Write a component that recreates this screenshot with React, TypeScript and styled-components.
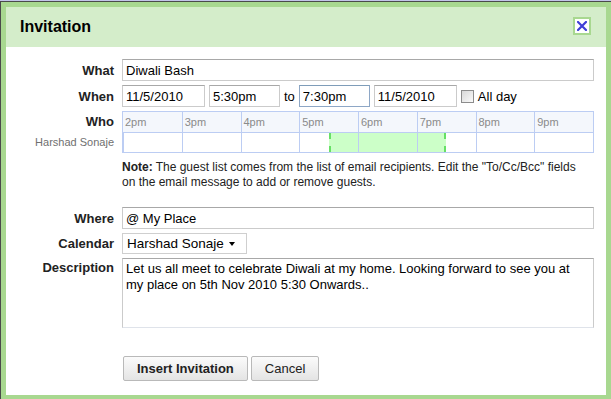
import React from 'react';
import styled, { createGlobalStyle } from 'styled-components';

const Global = createGlobalStyle`
  html, body { margin: 0; padding: 0; background: #fff; }
  body { font-family: "Liberation Sans", Arial, sans-serif; }
  *, *::before, *::after { box-sizing: border-box; }
`;

const FONT = `"Liberation Sans", Arial, sans-serif`;
const GRID_LINE = '#bccdf3';

const Screen = styled.div`
  width: 611px;
  height: 399px;
  overflow: hidden;
  background: #c3c6ea;
  padding-top: 1px;
`;

const Frame = styled.div`
  height: 400px;
  border-top: 1px solid #4a4a4a;
  border-left: 1px solid #4a4a4a;
`;

const Dialog = styled.div`
  width: 610px;
  height: 398px;
  border: 5px solid #a8d890;
  background: #fff;
  display: flex;
  flex-direction: column;
`;

const Header = styled.div`
  flex: none;
  height: 40px;
  background: #d4edca;
  display: flex;
  align-items: center;
  justify-content: space-between;
  padding: 0 15px 0 14px;
`;

const Title = styled.h1`
  margin: 0;
  font: bold 16px ${FONT};
  color: #000;
`;

const CloseButton = styled.button`
  width: 18px;
  height: 18px;
  padding: 0;
  margin-top: -2px;
  border: 2px solid #a8d890;
  background: #fff;
  display: flex;
  align-items: center;
  justify-content: center;
  cursor: pointer;
`;

const Body = styled.div`
  flex: 1;
  padding: 12px 11px 0 0;
`;

const Row = styled.div<{ $mt?: number; $align?: string }>`
  display: grid;
  grid-template-columns: 108px 472px;
  column-gap: 8px;
  margin-top: ${(p) => p.$mt ?? 0}px;
  align-items: ${(p) => p.$align ?? 'center'};
`;

const Label = styled.label<{ $pt?: number }>`
  text-align: right;
  font: bold 13px ${FONT};
  color: #222;
  padding-top: ${(p) => p.$pt ?? 0}px;
`;

const LabelStack = styled.div`
  display: flex;
  flex-direction: column;
  align-items: flex-end;
`;

const StackMain = styled.span`
  font: bold 13px ${FONT};
  color: #222;
  line-height: 21px;
`;

const StackSub = styled.span`
  font: 11px ${FONT};
  color: #707070;
  line-height: 20px;
`;

const TextInput = styled.input<{ $w?: number; $focus?: boolean }>`
  width: ${(p) => (p.$w ? `${p.$w}px` : '100%')};
  height: 22px;
  padding: 0 3px;
  border: 1px solid ${(p) => (p.$focus ? '#8ea7c6' : '#cbcbcb')};
  border-top-color: ${(p) => (p.$focus ? '#7f9db9' : '#a8a8a8')};
  background: #fff;
  font: 13px ${FONT};
  color: #000;
  outline: none;
  flex: none;
`;

const WhenLine = styled.div`
  display: flex;
  align-items: center;
  gap: 4px;
`;

const Plain = styled.span`
  font: 13px ${FONT};
  color: #000;
`;

const CheckBox = styled.span`
  width: 13px;
  height: 13px;
  border: 1px solid #8c8c8c;
  background: linear-gradient(135deg, #d8d8d8, #fafafa);
  flex: none;
`;

const Schedule = styled.div`
  border: 1px solid ${GRID_LINE};
`;

const TimeHeader = styled.div`
  display: grid;
  grid-template-columns: repeat(8, 1fr);
  height: 21px;
  background: #f4f7fc;
  border-bottom: 1px solid ${GRID_LINE};
`;

const TimeCell = styled.div`
  border-left: 1px solid ${GRID_LINE};
  &:first-child { border-left: none; }
  padding-left: 2px;
  font: 11px ${FONT};
  line-height: 20px;
  color: #8a8a8a;
`;

const Track = styled.div`
  position: relative;
  display: grid;
  grid-template-columns: repeat(8, 1fr);
  height: 19px;
`;

const TrackCell = styled.div`
  position: relative;
  z-index: 1;
  border-left: 1px solid ${GRID_LINE};
  &:first-child { border-left: none; }
`;

const Busy = styled.div`
  position: absolute;
  top: 0;
  bottom: 0;
  background: #ccffc8;
  border-left: 2px dashed #66e066;
  border-right: 2px dashed #66e066;
  z-index: 0;
`;

const Note = styled.div`
  max-width: 462px;
  font: 12px ${FONT};
  line-height: 15px;
  color: #222;
`;

const NoteLead = styled.strong`
  font-weight: bold;
  margin-right: 3px;
`;

const SelectBox = styled.button`
  width: 125px;
  height: 21px;
  padding: 0 11px 0 4px;
  border: 1px solid #cfcfcf;
  background: #fff;
  display: flex;
  align-items: center;
  justify-content: space-between;
  font: 13.5px ${FONT};
  color: #000;
  cursor: pointer;
`;

const Caret = styled.span`
  width: 0;
  height: 0;
  border-left: 3.5px solid transparent;
  border-right: 3.5px solid transparent;
  border-top: 4px solid #000;
`;

const TextArea = styled.textarea`
  width: 100%;
  height: 70px;
  padding: 2px 3px;
  border: 1px solid #cbcbcb;
  border-top-color: #a8a8a8;
  border-bottom-color: #dfe3ea;
  font: 13px ${FONT};
  line-height: 16px;
  color: #000;
  resize: none;
  overflow: hidden;
  outline: none;
  display: block;
`;

const Actions = styled.div`
  display: flex;
  gap: 3px;
  padding-left: 1px;
`;

const Button = styled.button<{ $primary?: boolean }>`
  height: 25px;
  padding: 0 13px;
  border: 1px solid #b9b9b9;
  border-radius: 2px;
  background: linear-gradient(#fbfbfb, #e4e4e4);
  font: ${(p) => (p.$primary ? 'bold' : 'normal')} 13px ${FONT};
  color: #222;
  cursor: pointer;
`;

const hours = ['2pm', '3pm', '4pm', '5pm', '6pm', '7pm', '8pm', '9pm'];
const startHour = 14;
const eventStart = 17.5;
const eventEnd = 19.5;

export default function App() {
  const span = hours.length;
  const left = ((eventStart - startHour) / span) * 100;
  const width = ((eventEnd - eventStart) / span) * 100;
  return (
    <>
      <Global />
      <Screen>
        <Frame>
          <Dialog>
            <Header>
              <Title>Invitation</Title>
              <CloseButton aria-label="Close">
                <svg width="10" height="10" viewBox="0 0 10 10">
                  <path d="M1 1 L9 9 M9 1 L1 9" stroke="#3f3fd6" strokeWidth="2.2" strokeLinecap="square" />
                </svg>
              </CloseButton>
            </Header>
            <Body>
              <Row>
                <Label>What</Label>
                <TextInput defaultValue="Diwali Bash" />
              </Row>
              <Row $mt={4}>
                <Label>When</Label>
                <WhenLine>
                  <TextInput $w={83} defaultValue="11/5/2010" />
                  <TextInput $w={71} defaultValue="5:30pm" />
                  <Plain>to</Plain>
                  <TextInput $w={71} $focus defaultValue="7:30pm" />
                  <TextInput $w={83} defaultValue="11/5/2010" />
                  <CheckBox />
                  <Plain>All day</Plain>
                </WhenLine>
              </Row>
              <Row $mt={4} $align="start">
                <LabelStack>
                  <StackMain>Who</StackMain>
                  <StackSub>Harshad Sonaje</StackSub>
                </LabelStack>
                <Schedule>
                  <TimeHeader>
                    {hours.map((h) => (
                      <TimeCell key={h}>{h}</TimeCell>
                    ))}
                  </TimeHeader>
                  <Track>
                    <Busy style={{ left: `${left}%`, width: `${width}%` }} />
                    {hours.map((h) => (
                      <TrackCell key={h} />
                    ))}
                  </Track>
                </Schedule>
              </Row>
              <Row $mt={7}>
                <span />
                <Note>
                  <NoteLead>Note:</NoteLead>The guest list comes from the list of email recipients. Edit the "To/Cc/Bcc" fields on the email message to add or remove guests.
                </Note>
              </Row>
              <Row $mt={17}>
                <Label>Where</Label>
                <TextInput defaultValue="@ My Place" />
              </Row>
              <Row $mt={4}>
                <Label>Calendar</Label>
                <div>
                  <SelectBox>
                    <span>Harshad Sonaje</span>
                    <Caret />
                  </SelectBox>
                </div>
              </Row>
              <Row $mt={4} $align="start">
                <Label $pt={2}>Description</Label>
                <TextArea
                  readOnly
                  defaultValue="Let us all meet to celebrate Diwali at my home. Looking forward to see you at my place on 5th Nov 2010 5:30 Onwards.."
                />
              </Row>
              <Row $mt={28}>
                <span />
                <Actions>
                  <Button $primary>Insert Invitation</Button>
                  <Button>Cancel</Button>
                </Actions>
              </Row>
            </Body>
          </Dialog>
        </Frame>
      </Screen>
    </>
  );
}
